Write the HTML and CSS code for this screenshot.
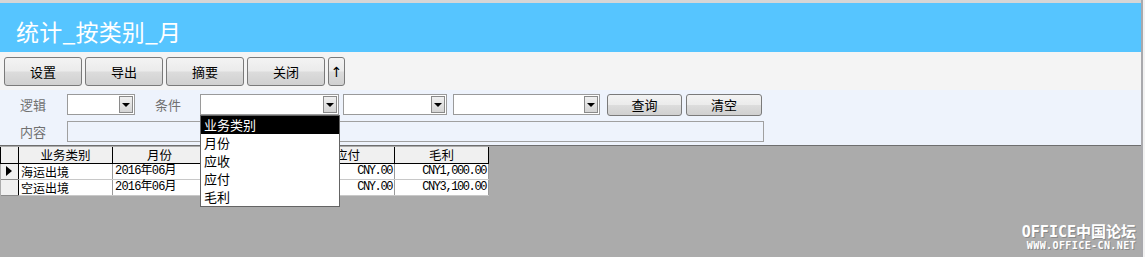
FILE: index.html
```html
<!DOCTYPE html>
<html lang="zh-CN">
<head>
<meta charset="utf-8">
<title>统计_按类别_月</title>
<link rel="stylesheet" href="styles.css">
</head>
<body>
<div class="window">
  <div class="main">
    <div class="topband"></div>
    <div class="header">统计_按类别_月</div>
    <div class="toolbar">
      <button class="btn tb">设置</button>
      <button class="btn tb">导出</button>
      <button class="btn tb">摘要</button>
      <button class="btn tb">关闭</button>
      <button class="btn tb-up">↑</button>
    </div>
    <div class="filter">
      <div class="frow">
        <span class="lbl lbl1">逻辑</span>
        <div class="combo c1"><span class="arrow"><i></i></span></div>
        <span class="lbl lbl2">条件</span>
        <div class="combo c2"><span class="arrow"><i></i></span>
          <ul class="dropdown">
            <li class="sel">业务类别</li>
            <li>月份</li>
            <li>应收</li>
            <li>应付</li>
            <li>毛利</li>
          </ul>
        </div>
        <div class="combo c3"><span class="arrow"><i></i></span></div>
        <div class="combo c4"><span class="arrow"><i></i></span></div>
        <button class="btn fb fb1">查询</button>
        <button class="btn fb fb2">清空</button>
      </div>
      <div class="frow row2">
        <span class="lbl lbl1">内容</span>
        <div class="textbox"></div>
      </div>
    </div>
    <div class="gridarea">
      <table class="grid">
        <thead>
          <tr>
            <th class="sel-col"></th>
            <th>业务类别</th>
            <th>月份</th>
            <th>应收</th>
            <th>应付</th>
            <th>毛利</th>
          </tr>
        </thead>
        <tbody>
          <tr>
            <td class="sel-col"><span class="ptr"></span></td>
            <td class="txt">海运出境</td>
            <td class="mono">2016年06月</td>
            <td class="num">CNY1,000.00</td>
            <td class="num">CNY.00</td>
            <td class="num">CNY1,000.00</td>
          </tr>
          <tr>
            <td class="sel-col"></td>
            <td class="txt">空运出境</td>
            <td class="mono">2016年06月</td>
            <td class="num">CNY3,100.00</td>
            <td class="num">CNY.00</td>
            <td class="num">CNY3,100.00</td>
          </tr>
        </tbody>
      </table>
      <div class="watermark">
        <div class="wm1">OFFICE中国论坛</div>
        <div class="wm2">WWW.OFFICE-CN.NET</div>
      </div>
    </div>
  </div>
  <div class="edge"></div>
</div>
</body>
</html>
```

FILE: styles.css
```css
* { box-sizing: border-box; }
html, body {
  margin: 0;
  padding: 0;
  width: 1145px;
  height: 257px;
  overflow: hidden;
  background: #f4f4f4;
  font-family: "Noto Sans CJK SC", "Liberation Sans", sans-serif;
}
.window {
  display: flex;
  width: 1145px;
  height: 257px;
}
.main {
  width: 1141px;
  display: flex;
  flex-direction: column;
}
.edge {
  width: 4px;
  border-left: 2px solid #a9a9ad;
  background: #f2f2f2;
}
.topband {
  height: 3px;
  background: #d6d6d6;
}
.header {
  height: 49px;
  background: #56c5ff;
  color: #ffffff;
  font-size: 23px;
  line-height: 28px;
  padding: 14px 0 0 16px;
  letter-spacing: 0.2px;
}
.toolbar {
  height: 38px;
  background: #f4f4f4;
  display: flex;
  gap: 3px;
  padding: 5px 0 0 4px;
}
.btn {
  font-family: "Noto Sans CJK SC", sans-serif;
  font-size: 13px;
  color: #000;
  border: 1px solid #7a7a7a;
  border-radius: 3px;
  background: linear-gradient(#f3f3f3 0%, #ebebeb 48%, #dcdcdc 52%, #d0d0d0 100%);
  padding: 0;
  margin: 0;
  line-height: 1;
}
.tb { width: 78px; height: 29px; }
.tb-up { width: 17px; height: 29px; font-size: 14px; font-family: "DejaVu Sans", sans-serif; }
.filter {
  height: 56px;
  background: #eef3fc;
  border-bottom: 1px solid #6e6e6e;
  padding-top: 4px;
}
.frow {
  display: flex;
  align-items: center;
  height: 21px;
  padding-left: 20px;
}
.row2 { margin-top: 6px; }
.lbl {
  font-size: 13px;
  color: #707070;
  line-height: 21px;
}
.lbl1 { width: 47px; }
.lbl2 { width: 45px; margin-left: 20px; }
.combo {
  position: relative;
  height: 21px;
  background: #fff;
  border: 1px solid #9a9a9a;
}
.c1 { width: 68px; }
.c2 { width: 139px; }
.c3 { width: 104px; margin-left: 4px; }
.c4 { width: 147px; margin-left: 6px; }
.arrow {
  position: absolute;
  right: 1px;
  top: 1px;
  width: 14px;
  height: 17px;
  border: 1px solid #8a8a8a;
  background: linear-gradient(#f0f0f0, #d4d4d4);
  display: flex;
  align-items: center;
  justify-content: center;
}
.arrow i {
  width: 0;
  height: 0;
  border-left: 4px solid transparent;
  border-right: 4px solid transparent;
  border-top: 4px solid #000;
}
.fb { width: 75px; height: 22px; }
.fb1 { margin-left: 7px; }
.fb2 { margin-left: 4px; width: 76px; }
.textbox {
  width: 697px;
  height: 21px;
  background: #eef3fc;
  border: 1px solid #a0a0a0;
}
.dropdown {
  position: absolute;
  left: -1px;
  top: 20px;
  width: 140px;
  height: 92px;
  margin: 0;
  padding: 0;
  list-style: none;
  background: #fff;
  border: 1px solid #646464;
  z-index: 10;
}
.dropdown li {
  height: 18px;
  line-height: 18px;
  font-size: 13px;
  padding-left: 3px;
  color: #000;
}
.dropdown li.sel {
  background: #000;
  color: #fff;
}
.gridarea {
  position: relative;
  flex: 1;
  background: #ababab;
  padding-top: 1px;
}
.grid {
  border-collapse: collapse;
  table-layout: fixed;
  font-size: 12px;
}
.grid th, .grid td {
  padding: 0;
  white-space: nowrap;
}
.grid th {
  width: 94px;
  height: 16px;
  line-height: 14px;
  background: #f0f0f0;
  font-weight: normal;
  border: 1px solid #000;
  border-top: none;
  text-align: center;
  font-size: 12.5px;
}
.grid th.sel-col { width: 18px; }
.grid td {
  height: 16px;
  line-height: 15px;
  background: #fff;
  border-right: 1px solid #9a9a9a;
  border-bottom: 1px solid #c8c8c8;
}
.grid td.sel-col {
  background: #f0f0f0;
  border-right: 1px solid #000;
  border-bottom: 1px solid #8a8a8a;
}
.ptr {
  display: block;
  margin-left: 5px;
  width: 0;
  height: 0;
  border-top: 5px solid transparent;
  border-bottom: 5px solid transparent;
  border-left: 6px solid #000;
}
.txt { padding-left: 2px !important; font-size: 12px; }
.mono {
  padding-left: 2px !important;
  font-family: "Liberation Mono", "Noto Sans CJK SC", monospace;
  font-size: 12px;
  letter-spacing: -0.8px;
}
.num {
  text-align: right;
  padding-right: 2px !important;
  font-family: "Liberation Mono", monospace;
  font-size: 12px;
  letter-spacing: -1.4px;
}
.watermark {
  position: absolute;
  right: 5px;
  bottom: 6px;
  text-align: right;
  color: #ffffff;
  text-shadow: 1px 1px 0 #8a8a8a;
}
.wm1 {
  font-family: "DejaVu Sans Mono", "Noto Sans CJK SC", monospace;
  font-size: 15px;
  font-weight: bold;
  line-height: 16px;
}
.wm2 {
  font-family: "DejaVu Sans Mono", monospace;
  font-size: 10px;
  font-weight: bold;
  line-height: 11px;
  letter-spacing: 0.4px;
}
```
